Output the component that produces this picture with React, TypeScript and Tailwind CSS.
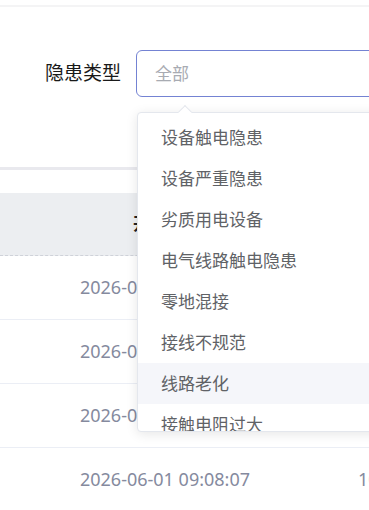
import React from 'react'

const options = [
  '设备触电隐患',
  '设备严重隐患',
  '劣质用电设备',
  '电气线路触电隐患',
  '零地混接',
  '接线不规范',
  '线路老化',
  '接触电阻过大',
  '私拉乱接',
]

const rows = [
  { time: '2026-06-01 09:12:45', no: '10' },
  { time: '2026-06-01 09:10:21', no: '10' },
  { time: '2026-06-01 09:09:33', no: '10' },
  { time: '2026-06-01 09:08:07', no: '10' },
]

const App = () => {
  return (
    <div
      className="relative w-[369px] h-[510px] overflow-hidden bg-white"
      style={{ fontFamily: '"Noto Sans", "Noto Sans CJK SC", sans-serif' }}
    >
      <div className="h-[5px]" />
      <div className="h-[2px] bg-[#f4f4f5]" />

      <div className="flex items-center pt-[43px]">
        <div className="w-[121px] shrink-0 flex justify-end whitespace-nowrap text-[19px] text-[#1a1a1a]">
          隐患类型
        </div>
        <div className="relative ml-[15px] w-[300px] h-[47px] shrink-0 border border-[#7483d3] rounded-[6px] flex items-center pl-[18px]">
          <span className="text-[17px] text-[#a8abb2]">全部</span>

          <div className="absolute left-0 top-[61px] w-[300px] z-10">
            <div className="absolute left-[43px] top-[-5px] w-[10px] h-[10px] bg-white border-l border-t border-[#e4e7ed] rotate-45" />
            <div className="h-[320px] overflow-hidden bg-white border border-[#e4e7ed] rounded-[4px] shadow-[0_2px_12px_rgba(0,0,0,0.1)] pt-[4px]">
              {options.map((o) => (
                <div
                  key={o}
                  className={
                    'h-[41px] flex items-center pl-[23px] whitespace-nowrap text-[17px] text-[#606266] ' +
                    (o === '线路老化' ? 'bg-[#f5f6fa]' : '')
                  }
                >
                  {o}
                </div>
              ))}
            </div>
          </div>
        </div>
      </div>

      <div className="h-[70px]" />
      <div className="h-[3px] bg-[#e9e9ee]" />
      <div className="h-[23px]" />

      <div className="flex h-[63px] bg-[#eceef1] border-b border-dashed border-[#cfd2d9] text-[17px] font-bold text-[#222]">
        <div className="w-[334px] shrink-0 flex items-center justify-center">开始时间</div>
        <div className="w-[200px] shrink-0 flex items-center pl-[24px]">编号</div>
      </div>

      {rows.map((r, i) => (
        <div
          key={i}
          className="flex h-[64px] border-b border-[#ebeef5] text-[18px] text-[#858a9e]"
        >
          <div className="w-[330px] shrink-0 flex items-center justify-center whitespace-nowrap">{r.time}</div>
          <div className="w-[200px] shrink-0 flex items-center pl-[28px]">{r.no}</div>
        </div>
      ))}
    </div>
  )
}

export default App
